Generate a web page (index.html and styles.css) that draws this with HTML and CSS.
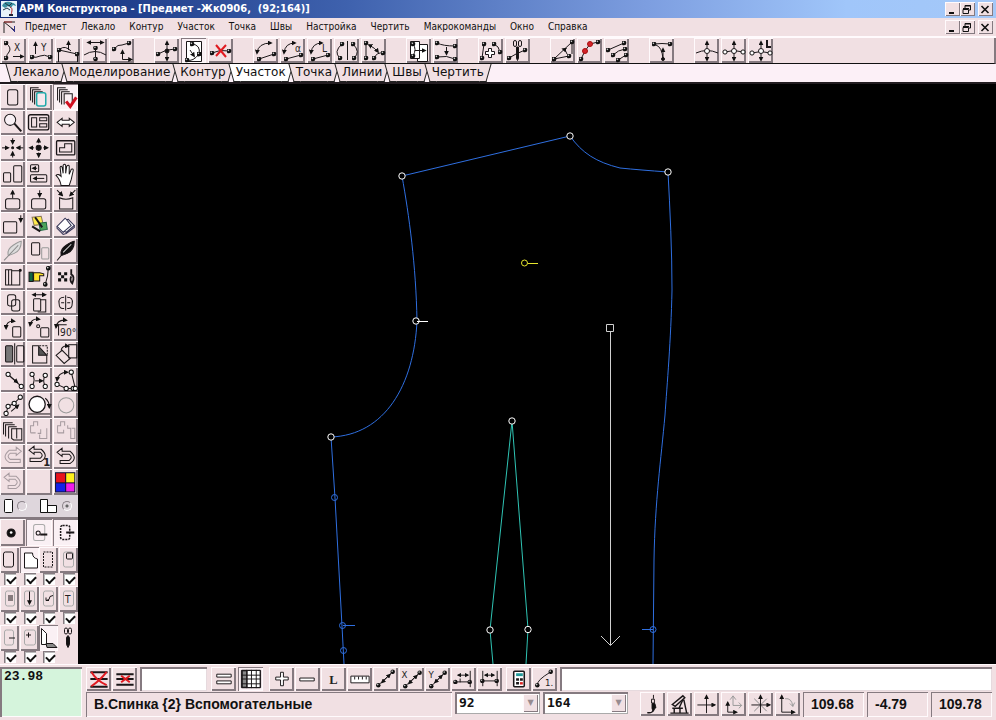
FILE: index.html
```html
<!DOCTYPE html>
<html lang="ru">
<head>
<meta charset="utf-8">
<title>АРМ Конструктора</title>
<link rel="stylesheet" href="styles.css">
</head>
<body>
<svg class="defs" aria-hidden="true">
  <defs>
    <marker id="dot" viewBox="0 0 6 6" refX="3" refY="3" markerWidth="5" markerHeight="5" markerUnits="userSpaceOnUse"><circle cx="3" cy="3" r="2.800" fill="#111"/><circle cx="2.300" cy="2.200" r="1" fill="#ccc"/></marker>
    <marker id="ring" viewBox="0 0 6 6" refX="3" refY="3" markerWidth="6" markerHeight="6" markerUnits="userSpaceOnUse"><circle cx="3" cy="3" r="2.100" fill="#fff" stroke="#111"/></marker>
    <marker id="arrow" viewBox="0 0 6 6" refX="4" refY="3" markerWidth="5" markerHeight="5" markerUnits="userSpaceOnUse" orient="auto-start-reverse"><path d="M0 0 6 3 0 6z" fill="#111"/></marker>
    <marker id="node" viewBox="0 0 8 8" refX="4" refY="4" markerWidth="8" markerHeight="8" markerUnits="userSpaceOnUse"><circle cx="4" cy="4" r="3.200" fill="#000" stroke="#fff"/></marker>
  </defs>
</svg>
<div class="app">
<header class="titlebar">
  <svg class="logo" viewBox="0 0 16 16" aria-hidden="true"><path fill="#e8f2fa" d="M0 0h16v16H0z"/><path d="M1 5C2 1 6 0 9 1s5 1 6 4l-3-1-2 3-3-2-3 2z" fill="#3a8fa0"/><path d="M4 2l4 3 3-3M2 9l4-2 3 2" stroke="#234" fill="none"/><path d="M9 6c3 1 2 4 1 8" stroke="#b22" fill="none"/><path d="M8 14h4" stroke="#223" stroke-width="2"/></svg>
  <h1>АРМ Конструктора - [Предмет -Жк0906,&nbsp; (92;164)]</h1>
  <div class="winbtns">
    <button aria-label="Свернуть"><svg viewBox="0 0 14 13"><path d="M4 10h5" stroke-width="2"/></svg></button><button aria-label="Восстановить"><svg viewBox="0 0 14 13"><path d="M5 5V2.500h5.500V7H9M3 6.500h5.500v4H3zM3 5.500h6M5 3h6"/></svg></button><button class="close" aria-label="Закрыть"><svg viewBox="0 0 14 13"><path d="M3.500 3l7 7M10.500 3l-7 7" stroke-width="1.600"/></svg></button>
  </div>
</header>
<nav class="menubar">
  <svg class="docicon" viewBox="0 0 16 16" aria-hidden="true"><path d="M2 14V3M2 3h11M2 3l10 8" stroke="#222" fill="none"/><path d="M2 3h8" stroke="#a33"/><path d="M12.500 7v6M9 9l4 4" stroke="#338"/></svg>
  <button>Предмет</button><button>Лекало</button><button>Контур</button><button>Участок</button><button>Точка</button><button>Швы</button><button>Настройка</button><button>Чертить</button><button>Макрокоманды</button><button>Окно</button><button>Справка</button>
  <div class="winbtns">
    <button aria-label="Свернуть окно"><svg viewBox="0 0 14 13"><path d="M4 10h5" stroke-width="2"/></svg></button><button aria-label="Восстановить окно"><svg viewBox="0 0 14 13"><path d="M5 5V2.500h5.500V7H9M3 6.500h5.500v4H3zM3 5.500h6M5 3h6"/></svg></button><button class="close" aria-label="Закрыть окно"><svg viewBox="0 0 14 13"><path d="M3.500 3l7 7M10.500 3l-7 7" stroke-width="1.600"/></svg></button>
  </div>
</nav>
<div class="toolbar" role="toolbar" aria-label="Участок">
  <div class="group">
    <button class="tool" aria-label="Сдвиг по X"><svg viewBox="0 0 25 25"><path class="ends" d="M5 5q6 5 3 9-2 2-3 6"/><text x="13" y="13">X</text><path class="to" d="M12 18.500h10"/></svg></button>
    <button class="tool" aria-label="Сдвиг по Y"><svg viewBox="0 0 25 25"><path class="to" d="M7.500 16V5"/><text x="13" y="13">Y</text><path class="ends" d="M4 19q4 1 8-1t10 1"/></svg></button>
    <button class="tool" aria-label="Поднять участок"><svg viewBox="0 0 25 25"><path class="dots" d="M4 12l18 4"/><path d="M3.500 12v12M22.500 16v8M5 11q5-4 11 2"/><path class="to" d="M13.500 12V4"/></svg></button>
    <button class="tool" aria-label="Растянуть"><svg viewBox="0 0 25 25"><path class="both" d="M6 4.500h15"/><path class="dots" d="M13.500 10v11"/><path d="M2 17q11-7 22 0"/></svg></button>
    <button class="tool" aria-label="Перенести участок"><svg viewBox="0 0 25 25"><path class="ends" d="M5 11q4-5 8-4l7-2"/><path class="both" d="M13.500 13v8.500h9"/></svg></button>
  </div>
  <div class="group">
    <button class="tool" aria-label="Изгиб"><svg viewBox="0 0 25 25"><path class="dots" d="M4 16q8-5 17-5"/><path class="both" d="M13 4v18"/><circle class="solid" cx="13" cy="13" r="2"/></svg></button>
    <button class="tool pressed" aria-label="Лист"><svg viewBox="0 0 25 25"><path d="M5.500 3.500h15v20h-15z" fill="#fff"/><path class="dots" d="M11 6q9 1 7 10"/><path class="dots" d="M18 16q-6 8-12 6"/><path class="to" d="M9 12l4 6"/></svg></button>
    <button class="tool" aria-label="Удалить участок"><svg viewBox="0 0 25 25"><path class="dots" d="M4 15q8-4 17-2"/><path class="red" d="M8 7l10 12M18 7L8 18"/></svg></button>
  </div>
  <div class="group">
    <button class="tool" aria-label="Поворот"><svg viewBox="0 0 25 25"><path class="both" d="M4 15Q5 5 18 5"/><path class="dots" d="M6 21l15-5"/></svg></button>
    <button class="tool" aria-label="Поворот на угол"><svg viewBox="0 0 25 25"><path class="both" d="M4 15Q5 5 15 5"/><text x="15" y="14">α</text><path class="dots" d="M6 21l15-4"/></svg></button>
    <button class="tool" aria-label="Поворот по длине"><svg viewBox="0 0 25 25"><path class="both" d="M4 15Q5 5 15 5"/><text x="15" y="14">L</text><path class="dots" d="M6 21l15-4"/></svg></button>
    <button class="tool" aria-label="Отразить"><svg viewBox="0 0 25 25"><path class="dots" d="M8 6q-9 8-2 14"/><path class="dots" d="M19 6q8 8 1 14"/><path d="M13.500 3v19"/></svg></button>
    <button class="tool" aria-label="Развернуть"><svg viewBox="0 0 25 25"><path class="dots" d="M5 5v15"/><path class="dots" d="M13 20q3-6 9-5"/><path class="both" d="M8 7q6 3 9 7"/></svg></button>
  </div>
  <div class="group">
    <button class="tool" aria-label="Копировать участок"><svg viewBox="0 0 25 25"><path d="M4.500 3.500h9v17h-9zM13.500 6.500h8v17h-10v-3" fill="#fff"/><path class="dots" d="M7 6q4 5 0 12"/><path class="to" d="M9 12.500h10"/></svg></button>
    <button class="tool" aria-label="Сместить участок"><svg viewBox="0 0 25 25"><path class="dots" d="M4 5q6 3 18 3"/><path class="dots" d="M4 19q10-2 18 2"/><path class="to" d="M13.500 9v7"/></svg></button>
  </div>
  <div class="group">
    <button class="tool" aria-label="Соединить"><svg viewBox="0 0 25 25"><path class="dots" d="M6 6L4 20"/><path class="dots" d="M16 6q5 2 6 8"/><path d="M10.500 10.500h3v3h3v3h-3v3h-3v-3h-3v-3h3z" fill="#fff"/></svg></button>
    <button class="tool" aria-label="Разрезать"><svg viewBox="0 0 25 25"><rect x="8.500" y="2.500" width="3" height="6" rx="1.500"/><rect x="13.500" y="2.500" width="3" height="6" rx="1.500"/><path class="solid" d="M11.500 9h2v11l-1 2.500-1-2.500z"/><path class="dots" d="M4 20q6-4 16-8"/></svg></button>
  </div>
  <div class="group">
    <button class="tool" aria-label="Угол"><svg viewBox="0 0 25 25"><path class="dots" d="M22 4L4 21"/><path class="dots" d="M4 21l15-3"/><path d="M22 4v12"/><path class="to" d="M17 16q-1-4-4-5"/></svg></button>
    <button class="tool" aria-label="Вставить точки"><svg viewBox="0 0 25 25"><path class="dots" d="M21 4l-8 2-5 7-4 8"/><circle class="reddot" cx="13" cy="6" r="2.500"/><circle class="reddot" cx="8" cy="13" r="2.500"/></svg></button>
    <button class="tool" aria-label="Параллельные"><svg viewBox="0 0 25 25"><path class="dots" d="M4 12l16-7"/><path class="dots" d="M9 17q5-5 12-6"/><path class="dots" d="M14 22l8-5"/></svg></button>
  </div>
  <div class="group">
    <button class="tool" aria-label="Переместить точку"><svg viewBox="0 0 25 25"><path class="dots" d="M5 6q8-1 16 0"/><path class="to" d="M14 22V11"/><path d="M7 7q6 2 7 14"/><circle class="solid" cx="14" cy="21" r="1.500"/></svg></button>
  </div>
  <div class="group">
    <button class="tool" aria-label="Сгладить"><svg viewBox="0 0 25 25"><path class="both" d="M13 4v18"/><path d="M2 15q11-5 22 0"/><circle cx="13" cy="13" r="2.500" fill="#fff"/></svg></button>
    <button class="tool" aria-label="Сгладить по точкам"><svg viewBox="0 0 25 25"><path class="both" d="M13 4v18"/><path class="rings" d="M4 14q9-3 18 0"/><circle cx="13" cy="13" r="2.500" fill="#fff"/></svg></button>
    <button class="tool" aria-label="Сгладить по длине"><svg viewBox="0 0 25 25"><path class="both" d="M13 4v18"/><path class="rings" d="M4 15q9-3 18 0"/><circle cx="13" cy="13" r="2.500" fill="#fff"/><path d="M19 2v7h4" stroke-width="2"/></svg></button>
  </div>
</div>
<div class="tabs" role="tablist">
  <button role="tab">Лекало</button><button role="tab">Моделирование</button><button role="tab">Контур</button><button role="tab" class="active" aria-selected="true">Участок</button><button role="tab">Точка</button><button role="tab">Линии</button><button role="tab">Швы</button><button role="tab">Чертить</button>
</div>
<main class="work">
<aside class="side">
  <div class="palette">
    <button class="tool" aria-label="Деталь"><svg viewBox="0 0 25 25"><rect x="7.500" y="5.500" width="10" height="15" rx="2"/></svg></button>
    <button class="tool" aria-label="Набор деталей"><svg viewBox="0 0 25 25"><path d="M4.500 16V3.500h8M6.500 18V5.500h8M8.500 20V7.500h8"/><rect x="10.500" y="8.500" width="9" height="13" rx="2" fill="#f6e8ec" stroke="#2aa" stroke-width="1.500"/></svg></button>
    <button class="tool pressed" aria-label="Выбрать детали"><svg viewBox="0 0 25 25"><path d="M4.500 16V3.500h8M6.500 18V5.500h8M8.500 20V7.500h8M11 20V9.500h8v9"/><path d="M13 17l4 5 6-9" stroke="#d00f20" stroke-width="3"/></svg></button>

    <button class="tool" aria-label="Лупа"><svg viewBox="0 0 25 25"><circle cx="10" cy="9.500" r="5.500" fill="#f8f0f4"/><path d="M14 13l7 8" stroke-width="2"/></svg></button>
    <button class="tool" aria-label="Раскладка"><svg viewBox="0 0 25 25"><rect x="2.500" y="4.500" width="20" height="15" rx="2" stroke-width="1.300"/><path d="M5.500 7.500h5v9h-5zM13.500 7.500h7v3h-7zM13.500 13.500h7v3h-7z"/></svg></button>
    <button class="tool" aria-label="По ширине"><svg viewBox="0 0 25 25"><path d="M4 12l5-4v2h7V8l5 4-5 4v-2H9v2z" fill="#fff"/></svg></button>

    <button class="tool" aria-label="Сжать"><svg viewBox="0 0 25 25"><path class="to" d="M12.500 3v5"/><path class="to" d="M12.500 22v-5"/><path class="to" d="M2 12.500h6"/><path class="to" d="M23 12.500h-6"/><circle class="solid" cx="12.500" cy="12.500" r="1"/></svg></button>
    <button class="tool" aria-label="Центр"><svg viewBox="0 0 25 25"><path class="to" d="M12.500 8V4"/><path class="to" d="M12.500 17v4"/><path class="to" d="M8 12.500H4"/><path class="to" d="M17 12.500h4"/><circle class="solid" cx="12.500" cy="12.500" r="2.500"/></svg></button>
    <button class="tool" aria-label="Контур детали"><svg viewBox="0 0 25 25"><rect x="3.500" y="5.500" width="18" height="14" rx="1" stroke-width="1.300"/><path d="M6.500 16.500v-4h5v-4h7v8z"/></svg></button>

    <button class="tool" aria-label="Масштаб"><svg viewBox="0 0 25 25"><rect x="3.500" y="11.500" width="7" height="9" rx="1"/><rect x="13.500" y="4.500" width="8" height="16" rx="1"/></svg></button>
    <button class="tool" aria-label="Перенос"><svg viewBox="0 0 25 25"><rect x="4.500" y="3.500" width="8" height="7" rx="1"/><rect x="4.500" y="13.500" width="16" height="7" rx="1"/><path class="to" d="M11 7H7"/><path class="to" d="M18 17H8"/></svg></button>
    <button class="tool" aria-label="Рука"><svg viewBox="0 0 25 25"><path d="M8 24q-1-6-5-10 2-2 5 1L7 6q1-2 2 0l1 6V4q1.500-2 2.500 0v8l1-7q2-2 2.500 0v8l2-5q2-1 2 1l-2 9-2 6z" fill="#fff"/></svg></button>

    <button class="tool" aria-label="Поднять"><svg viewBox="0 0 25 25"><rect x="5.500" y="11.500" width="14" height="10" rx="2"/><path class="to" d="M12.500 11V4"/></svg></button>
    <button class="tool" aria-label="Опустить"><svg viewBox="0 0 25 25"><rect x="5.500" y="11.500" width="14" height="10" rx="2"/><path class="to" d="M13.500 3v6"/></svg></button>
    <button class="tool" aria-label="Собрать"><svg viewBox="0 0 25 25"><path class="to" d="M4 3l5 5"/><path class="to" d="M22 3l-5 5"/><path d="M6.500 10.500q6 3 13 0v11h-13z"/></svg></button>

    <button class="tool" aria-label="Сдвинуть вниз"><svg viewBox="0 0 25 25"><rect x="3.500" y="9.500" width="13" height="11" rx="1"/><path class="to" d="M20.500 3v6"/></svg></button>
    <button class="tool" aria-label="Цвет"><svg viewBox="0 0 25 25"><path d="M6 5l9-1 2 8-9 1z" fill="#ffe94a" stroke="#875"/><path d="M13 11l7-1 1 7-7 1z" fill="#4ba35a" stroke="#264"/><path d="M6 14l8 5" stroke-width="2"/><path d="M9 5l7 10" stroke-width="2"/></svg></button>
    <button class="tool" aria-label="Справочник"><svg viewBox="0 0 25 25"><path d="M4 14l8-8q2 2 3 1l6 6-8 7q-2-2-3 0z" fill="#fff" stroke="#335"/><path d="M13 7l5 6-7 6M4 14v2l6 6 3-1 8-6v-2" stroke="#335"/></svg></button>

    <button class="tool" aria-label="Перо серое"><svg viewBox="0 0 25 25"><path d="M8 16q-1-5 5-9t8-4q0 9-7 12t-6 1z" fill="#ddd" stroke="#999"/><path d="M4 22L18 7" stroke="#888"/></svg></button>
    <button class="tool" aria-label="Копия детали"><svg viewBox="0 0 25 25"><rect x="5.500" y="4.500" width="8" height="12" rx="1"/><rect x="15.500" y="9.500" width="7" height="11" rx="1" stroke="#999"/></svg></button>
    <button class="tool" aria-label="Перо"><svg viewBox="0 0 25 25"><path d="M8 16q-1-5 5-9t8-4q0 9-7 12t-6 1z" class="solid"/><path d="M4 22l5-6"/><path d="M10 14L18 6" stroke="#ddd"/></svg></button>

    <button class="tool" aria-label="Складки"><svg viewBox="0 0 25 25"><path d="M5.500 5.500h3v15h-3zM8.500 5.500h3v15h-3zM11.500 6.500h8v14h-8z"/><circle class="solid" cx="20" cy="6" r="1"/></svg></button>
    <button class="tool" aria-label="Указать"><svg viewBox="0 0 25 25"><path d="M7.500 8.500h6l4 1v2h-4v5h-6z" fill="#ffe32b"/><path d="M3 8h4v9H3z" fill="#164"/><path class="ends" d="M22 4q0 8-3 16"/></svg></button>
    <button class="tool" aria-label="Кнопки"><svg viewBox="0 0 25 25"><path d="M5 8h3v3H5zM11 8h3v3h-3zM8 11h3v3H8zM5 14h3v3H5zM11 14h3v3h-3z" fill="#111" stroke="none"/><path d="M18 5v5q4 2 1 9-3-3-1-7" stroke-width="1.800"/></svg></button>

    <button class="tool" aria-label="Пересечение"><svg viewBox="0 0 25 25"><rect x="7.500" y="4.500" width="8" height="11" rx="2"/><rect x="11.500" y="9.500" width="8" height="11" rx="2"/></svg></button>
    <button class="tool" aria-label="Раздвинуть"><svg viewBox="0 0 25 25"><path class="both" d="M7 4.500h12"/><rect x="7.500" y="8.500" width="7" height="12" rx="1"/><path d="M14.500 9.500h5v12h-8"/></svg></button>
    <button class="tool" aria-label="Симметрия"><svg viewBox="0 0 25 25"><path d="M12.500 5v15M11 7q-6 0-5 6 0 6 5 5M14 7q6 0 5 6 0 6-5 5M8 12.500h3M14 12.500h3"/></svg></button>

    <button class="tool" aria-label="Повернуть"><svg viewBox="0 0 25 25"><path class="both" d="M6 13q0-8 8-7"/><rect x="12.500" y="11.500" width="8" height="10" rx="1"/></svg></button>
    <button class="tool" aria-label="Повернуть вокруг точки"><svg viewBox="0 0 25 25"><path class="both" d="M4 10q1-7 9-6"/><circle cx="12" cy="11" r="1.500"/><rect x="14.500" y="12.500" width="8" height="9" rx="1"/></svg></button>
    <button class="tool" aria-label="Повернуть на 90°"><svg viewBox="0 0 25 25"><path class="both" d="M3 12q1-8 10-7"/><path d="M5.500 20V9.500h8"/><text x="7" y="21">90°</text></svg></button>

    <button class="tool" aria-label="Зеркало"><svg viewBox="0 0 25 25"><rect x="5.500" y="4.500" width="7" height="16" rx="1" fill="#777"/><path d="M14.500 2v21"/><rect x="16.500" y="4.500" width="7" height="16" rx="1"/></svg></button>
    <button class="tool" aria-label="Отворот"><svg viewBox="0 0 25 25"><path d="M12.500 4.500h-6v17h14v-8"/><path d="M12.500 5l8 9h-8z" fill="#555"/><path d="M13 4.500h8v10" stroke-dasharray="2 1"/></svg></button>
    <button class="tool" aria-label="Наложить"><svg viewBox="0 0 25 25"><rect x="15.500" y="3.500" width="8" height="13"/><path d="M3 14l6-5 8 8-6 5z"/><path class="to" d="M8 9q1-5 7-4"/></svg></button>

    <button class="tool" aria-label="Отрезок"><svg viewBox="0 0 25 25"><path class="rings" d="M8 7l13 12"/><path class="to" d="M10 9l7 6"/></svg></button>
    <button class="tool" aria-label="Перенести отрезок"><svg viewBox="0 0 25 25"><path class="rings" d="M6 7q4 5 0 12"/><path class="rings" d="M19 8q-3 5 0 11"/><path class="to" d="M9 13.500h7"/></svg></button>
    <button class="tool" aria-label="Дуга"><svg viewBox="0 0 25 25"><path class="rings" d="M4 17l9 4h7"/><path class="rings" d="M18 5l4 16"/><path class="both" d="M4 13q1-8 10-8"/></svg></button>

    <button class="tool" aria-label="Ломаная"><svg viewBox="0 0 25 25"><path class="rings" d="M6 21l2-7 6-3 6-6"/><path class="to" d="M11 19l7-6"/></svg></button>
    <button class="tool" aria-label="Окружность"><svg viewBox="0 0 25 25"><circle cx="11" cy="12" r="8" fill="#fff" stroke-width="1.300"/><path d="M2 21.500h22"/><path class="to" d="M19 6q4 3 4 9"/></svg></button>
    <button class="tool" aria-label="Круг"><svg viewBox="0 0 25 25"><circle cx="13" cy="13" r="7.500" stroke="#999"/></svg></button>

    <button class="tool" aria-label="Стопка"><svg viewBox="0 0 25 25"><path d="M3.500 16V4.500h9M5.500 18V6.500h9M8.500 20V8.500h8M11.500 20V10.500h10v11h-8z"/><path d="M16.500 10v10"/></svg></button>
    <button class="tool off" aria-label="Разделить"><svg viewBox="0 0 25 25"><path d="M4.500 14.500v-7h3v-4h4v4M4.500 14.500h5M14.500 11v4h-3M20.500 10v10h-7v-4"/></svg></button>
    <button class="tool off" aria-label="Объединить"><svg viewBox="0 0 25 25"><path d="M4.500 14.500v-7h3v-4h4v4M4.500 14.500h6v-3M14.500 7v3h3v10h4V10h-3"/></svg></button>

    <button class="tool off" aria-label="Вернуть"><svg viewBox="0 0 25 25"><path d="M16 3l5 4-5 4V9h-6q-4 3 0 6h10v3H9q-8-5 0-12h7z"/></svg></button>
    <button class="tool" aria-label="Отменить один шаг"><svg viewBox="0 0 25 25"><path d="M8 2L3 6l5 4V8h6q4 3 0 6H4v3h11q8-5 0-12H8z"/><text class="bold" x="17" y="22">1</text></svg></button>
    <button class="tool" aria-label="Отменить"><svg viewBox="0 0 25 25"><path d="M9 4L4 8l5 4v-2h7q4 3 0 6H7v3h10q8-5 0-12H9z"/></svg></button>

    <button class="tool off" aria-label="Отмена недоступна"><svg viewBox="0 0 25 25"><path d="M9 4L4 8l5 4v-2h6q4 3 0 6H8v3h8q8-5 0-12H9z"/></svg></button>
    <button class="tool" aria-label="Пусто"></button>
    <button class="tool" aria-label="Палитра"><svg viewBox="0 0 25 25"><path d="M2 3h20v20H2z" fill="#113" stroke="none"/><path fill="#e8141c" stroke="none" d="M3 4h9v9H3z"/><path fill="#fff01c" stroke="none" d="M13 4h8v9h-8z"/><path fill="#1420e8" stroke="none" d="M3 14h9v8H3z"/><path fill="#f01ce8" stroke="none" d="M13 14h8v8h-8z"/></svg></button>
  </div>
  <div class="modes">
    <label><svg viewBox="0 0 12 18"><rect x="2.500" y="2.500" width="8" height="13" rx="1"/></svg><input type="radio" name="mode" aria-label="Одна деталь"></label>
    <label><svg viewBox="0 0 20 18"><path d="M1.500 2.500h7v13h-7zM8.500 8.500h9v7h-9z"/></svg><input type="radio" name="mode" checked aria-label="Две детали"></label>
  </div>
  <div class="marks">
    <button class="tool" aria-label="Точка"><svg viewBox="0 0 25 25"><circle class="solid" cx="11" cy="13" r="4"/><circle cx="11" cy="12.500" r="1.300" fill="#fff" stroke="none"/></svg></button>
    <button class="tool pressed" aria-label="Надсечка"><svg viewBox="0 0 25 25"><rect x="7.500" y="4.500" width="11" height="16" rx="2" stroke="#aaa"/><circle cx="12" cy="13" r="2"/><path d="M14 14.500h7" stroke-width="2"/></svg></button>
    <button class="tool pressed" aria-label="Надсечка по шву"><svg viewBox="0 0 25 25"><rect x="7.500" y="5.500" width="9" height="14" rx="2" stroke-dasharray="2 1" stroke-width="1.500"/><path d="M13 12.500h8" stroke-width="2"/></svg></button>
  </div>
  <div class="layers">
    <div><button class="tool" aria-label="Деталь"><svg viewBox="0 0 19 25"><rect x="3.500" y="4.500" width="10" height="15" rx="2"/></svg></button><input type="checkbox" checked aria-label="Деталь"></div>
    <div><button class="tool pressed" aria-label="Контур"><svg viewBox="0 0 19 25"><path d="M4.500 20.500v-15h8q0 5 5 6v9z" fill="#fff"/></svg></button><input type="checkbox" checked aria-label="Контур"></div>
    <div><button class="tool" aria-label="Шов"><svg viewBox="0 0 19 25"><rect x="4.500" y="4.500" width="9" height="15" stroke-dasharray="2 1"/></svg></button><input type="checkbox" checked aria-label="Шов"></div>
    <div><button class="tool" aria-label="Карман"><svg viewBox="0 0 19 25"><rect x="4.500" y="4.500" width="10" height="15" rx="2" stroke="#aaa"/><rect x="7.500" y="5.500" width="6" height="6" rx="1"/></svg></button><input type="checkbox" checked aria-label="Карман"></div>
    <div><button class="tool" aria-label="Надписи"><svg viewBox="0 0 19 25"><rect x="5.500" y="4.500" width="9" height="15" rx="2" stroke="#aaa"/><path d="M8 9.500h5M8 11.500h5M8 13.500h5"/></svg></button><input type="checkbox" checked aria-label="Надписи"></div>
    <div><button class="tool" aria-label="Долевая"><svg viewBox="0 0 19 25"><rect x="4.500" y="4.500" width="10" height="15" rx="2" stroke="#aaa"/><path class="to" d="M9.500 5v12"/></svg></button><input type="checkbox" checked aria-label="Долевая"></div>
    <div><button class="tool" aria-label="Размеры"><svg viewBox="0 0 19 25"><rect x="4.500" y="4.500" width="10" height="15" rx="2" stroke="#aaa"/><path d="M7 14l3-1 1-3 3-1M7 11v3h3"/></svg></button><input type="checkbox" checked aria-label="Размеры"></div>
    <div><button class="tool" aria-label="Текст"><svg viewBox="0 0 19 25"><rect x="4.500" y="4.500" width="10" height="15" rx="2" stroke="#aaa"/><text x="6" y="16">T</text></svg></button><input type="checkbox" checked aria-label="Текст"></div>
    <div><button class="tool" aria-label="Минус"><svg viewBox="0 0 19 25"><rect x="4.500" y="4.500" width="9" height="15" rx="2" stroke="#aaa"/><path d="M9 12.500h6"/></svg></button><input type="checkbox" checked aria-label="Минус"></div>
    <div><button class="tool" aria-label="Плюс"><svg viewBox="0 0 19 25"><rect x="4.500" y="4.500" width="11" height="15" rx="2" stroke="#aaa"/><path d="M6 9.500h5M8.500 7v5"/></svg></button><input type="checkbox" checked aria-label="Плюс"></div>
    <div><button class="tool pressed" aria-label="Лекало"><svg viewBox="0 0 19 25"><path d="M2.500 3l5 5v11h-5z" fill="#fff"/><path d="M7 18h7l4 4H8z" fill="#888"/></svg></button><input type="checkbox" checked aria-label="Лекало"></div>
    <div><button class="tool flat" aria-label="Ножницы"><svg viewBox="0 0 19 25"><rect x="5.500" y="2.500" width="3" height="6" rx="1.500"/><rect x="9.500" y="2.500" width="3" height="6" rx="1.500"/><path class="solid" d="M7.500 12L9 10l1.500 2v7L9 22l-1.500-3z"/></svg></button></div>
  </div>
</aside>
<svg class="drawing" viewBox="78 84 918 580" preserveAspectRatio="xMinYMin slice" role="img" aria-label="Чертёж спинки">
  <g class="outline">
    <path d="M402 176L570 136C582 153 596 162 620 168Q640 170 668 172C670 210 672 250 672 290C671 340 667 385 665 415C661 460 655 500 654 560L653 664"/>
    <path d="M402 176C409 215 416 265 417 321C414 385 385 435 331 437L335 498 342 626 344 664"/>
    <circle cx="334.500" cy="497.500" r="3"/><circle cx="342.500" cy="625.500" r="3"/><circle cx="343.500" cy="650.500" r="3"/><circle cx="653" cy="629.500" r="3"/>
    <path d="M343 625.500h12M642 629.500h11"/>
  </g>
  <path class="dart" d="M493 664L490 630 512 421 528 629 526 664"/>
  <path class="knots" d="M402 176L570 136 668 172M416 321L331 437M512 421L490 630 528 629.500"/>
  <path class="tick" d="M417 321.500h11"/>
  <path class="yellow" d="M528 263.500h10"/><circle class="yellow" cx="524.500" cy="263" r="3"/>
  <path class="grain" d="M606.500 324.500h7v7h-7zM610.500 331v314M601 636l9.500 9.500 9.500-9.500"/>
</svg>
</main>
<footer class="bottom">
  <output class="readout">23.98</output>
  <div class="rows">
    <div class="row">
      <button class="tool" aria-label="Удалить всё"><svg viewBox="0 0 25 25"><path d="M4 5.500h18M4 12.500h18M4 20.500h18" stroke-width="2"/><path class="red" d="M5 5q5 9 16 14M21 5Q14 14 5 20"/></svg></button>
      <button class="tool" aria-label="Удалить строку"><svg viewBox="0 0 25 25"><path d="M4 7.500h18M4 12.500h18M4 18.500h18" stroke-width="2"/><path class="red" d="M9 9l9 7M18 9l-9 7"/></svg></button>
      <input class="field short" type="text" aria-label="Значение">
      <button class="tool" aria-label="Равно"><svg viewBox="0 0 25 25"><path d="M5.500 7.500h15v3h-15zM5.500 14.500h15v3h-15z" fill="#fff"/></svg></button>
      <button class="tool pressed wide" aria-label="Таблица"><svg viewBox="0 0 25 25"><path d="M3.500 3.500h19v18h-19z" fill="#fff"/><path d="M4 4h5v17H4z" fill="#888"/><path d="M3 3.500h20v18h-20zM8.500 3v19M13.500 3v19M18.500 3v19M3 8.500h20M3 12.500h20M3 17.500h20"/></svg></button>
      <button class="tool" aria-label="Плюс"><svg viewBox="0 0 25 25"><path d="M11.500 5.500h3v5h5v3h-5v6h-3v-6h-5v-3h5z" fill="#fff"/></svg></button>
      <button class="tool" aria-label="Минус"><svg viewBox="0 0 25 25"><path d="M4.500 11.500h15v3h-15z" fill="#fff"/></svg></button>
      <button class="tool" aria-label="Длина"><svg viewBox="0 0 25 25"><text class="serif" x="8" y="18">L</text></svg></button>
      <button class="tool" aria-label="Линейка"><svg viewBox="0 0 25 25"><path d="M3.500 9.500h19v7h-19z" fill="#fff"/><path d="M7.500 10v3M11.500 10v3M15.500 10v3M19.500 10v3"/></svg></button>
      <button class="tool" aria-label="Расстояние"><svg viewBox="0 0 25 25"><path class="dots" d="M5 19L20 5"/><path class="both" d="M9 16l8-8"/></svg></button>
      <button class="tool" aria-label="Расстояние по X"><svg viewBox="0 0 25 25"><path class="dots" d="M6 20L21 6"/><path class="both" d="M10 17l8-8"/><text x="2" y="11">X</text></svg></button>
      <button class="tool" aria-label="Расстояние по Y"><svg viewBox="0 0 25 25"><path class="dots" d="M6 20L20 6"/><path class="both" d="M10 16l7-7"/><text x="3" y="11">Y</text></svg></button>
      <button class="tool" aria-label="Замер"><svg viewBox="0 0 25 25"><path class="both" d="M7 8.500h10"/><path class="dots" d="M4 15.500h15"/><path d="M19.500 4v17M9 12v4"/></svg></button>
      <button class="tool" aria-label="Замер между"><svg viewBox="0 0 25 25"><path class="both" d="M8 8.500h9"/><path class="dots" d="M5 14.500h15"/><path d="M5.500 4v16M20.500 4v16"/></svg></button>
      <button class="tool spaced" aria-label="Калькулятор"><svg viewBox="0 0 25 25"><rect x="7.500" y="4.500" width="11" height="16" rx="1" fill="#fff" stroke-width="1.600"/><path d="M10 8h7" stroke="#299" stroke-width="3"/><path d="M10 13h3M14 13h3M10 17h3" stroke-width="2.500"/><path d="M14 17h3" stroke="#d22" stroke-width="2.500"/></svg></button>
      <button class="tool" aria-label="Дуга"><svg viewBox="0 0 25 25"><path class="ends" d="M5 19q0-3 3-6t11-8"/><text x="13" y="20">1.</text></svg></button>
      <input class="field command" type="text" aria-label="Команда">
    </div>
    <div class="row status">
      <div class="panel name">В.Спинка {2} Вспомогательные</div>
      <span class="combo"><select aria-label="Размер"><option>92</option></select></span>
      <span class="combo"><select aria-label="Рост"><option>164</option></select></span>
      <div class="views">
        <button class="tool" aria-label="Кисть"><svg viewBox="0 0 25 25"><path d="M13.500 3v4"/><path d="M11.500 7.500h3v4h-3z"/><path class="solid" d="M12 12h3l1 4-3 4-1-3z"/><path d="M7 21.500q5 1 7-3" stroke-width="1.500"/></svg></button>
        <button class="tool" aria-label="Стол"><svg viewBox="0 0 25 25"><path d="M5 13L16 4l2 2L8 15z" stroke-width="1.500"/><path d="M3 22h19M17 8l3 14M5 17h11M7 17v5M13 17v5M16 8l-4 9" stroke-width="1.500"/></svg></button>
        <button class="tool" aria-label="Оси"><svg viewBox="0 0 25 25"><path class="to" d="M12.500 22V4"/><path class="to" d="M3 13.500h18"/></svg></button>
        <button class="tool" aria-label="Перенос осей"><svg viewBox="0 0 25 25"><path d="M12 14V5M9 8l3-4 3 4M12 14h9M18 11l3 3-3 3" stroke="#999"/><path class="both" d="M6.500 11v10h9"/></svg></button>
        <button class="tool" aria-label="Поворот осей"><svg viewBox="0 0 25 25"><path d="M6 7l13 13M19 7L6 20" stroke="#888"/><path class="to" d="M12.500 22V4"/><path class="to" d="M3 13.500h19"/></svg></button>
        <button class="tool" aria-label="Угол осей"><svg viewBox="0 0 25 25"><path class="both" d="M6.500 4v17h13"/><path d="M10 7q7-1 8 8M15 12l3 3 2-4" stroke="#999"/></svg></button>
      </div>
      <div class="panel num">109.68</div>
      <div class="panel num">-4.79</div>
      <div class="panel num">109.78</div>
    </div>
  </div>
</footer>
</div>
</body>
</html>
```

FILE: styles.css
```css
:root {
  --face: #f1e0e3;
  --light: #fffafc;
  --shade: #857a80;
}
* { box-sizing: border-box; }
body {
  margin: 0;
  background: var(--face);
  color: #111;
  font: 10px "DejaVu Sans Condensed", "DejaVu Sans", sans-serif;
}
button, input, select { font: inherit; color: inherit; margin: 0; padding: 0; border: 0; border-radius: 0; background: none; }
.defs { position: absolute; width: 0; height: 0; }
.app { display: flex; flex-direction: column; height: 100vh; min-height: 640px; overflow: hidden; }

/* Title and menu */
.titlebar {
  display: flex; align-items: center; height: 18px; padding: 0 3px 0 1px; gap: 2px;
  background: linear-gradient(90deg, #0f2b78, #3f62ae 35%, #7d9ee0 65%, #a0c6fa 85%, #a4c8f8);
  color: #fff;
}
.titlebar h1 { margin: 0; flex: 1; font-size: 11px; line-height: 16px; font-weight: bold; white-space: nowrap; }
.logo, .docicon { width: 16px; height: 16px; flex: none; }
.menubar { display: flex; align-items: center; height: 20px; padding: 0 3px 0 2px; border-bottom: 2px solid var(--light); }
.menubar > button { padding: 0 7px; line-height: 16px; white-space: nowrap; }
.winbtns { display: flex; margin-left: auto; }
.winbtns button { width: 15px; height: 14px; background: var(--face); box-shadow: inset 1px 1px var(--light), inset -1px -1px var(--shade); }
.winbtns .close { margin-left: 3px; }
.winbtns svg { display: block; width: 14px; height: 13px; fill: none; stroke: #111; }

/* Tool buttons */
.tool {
  width: 25px; height: 25px; flex: none; overflow: hidden;
  background: var(--face);
  box-shadow: inset 1px 1px var(--light), inset -2px -2px var(--shade);
}
.tool.pressed { background: #faf0f4; box-shadow: inset 1px 1px var(--shade), inset -1px -1px var(--light); }
.tool.flat { box-shadow: none; }
.tool svg { display: block; width: 100%; height: 100%; fill: none; stroke: #1a1618; }
.tool.off svg { stroke: #a79ba0; }
.tool text { fill: #222; stroke: none; font-size: 10px; }
.tool text.bold { font-size: 11px; font-weight: bold; }
.tool text.serif { font: bold 13px "Liberation Serif", serif; }
.tool .solid { fill: #111; }
.tool .red { stroke: #e01a20; stroke-width: 2; }
.tool .reddot { fill: #d3222a; stroke: #a11; }
.dots { marker-start: url(#dot); marker-mid: url(#dot); marker-end: url(#dot); }
.ends { marker-start: url(#dot); marker-end: url(#dot); }
.rings { marker-start: url(#ring); marker-mid: url(#ring); marker-end: url(#ring); }
.to { marker-end: url(#arrow); }
.both { marker-start: url(#arrow); marker-end: url(#arrow); }

.toolbar { display: flex; gap: 20px; height: 26px; padding-left: 1px; border-bottom: 1px solid #111; border-right: 2px solid var(--shade); }
.group { display: flex; gap: 2px; }

/* Tabs */
.tabs { display: flex; gap: 8px; height: 20px; padding-left: 12px; background: #fcf0f7; border-bottom: 2px solid #221c20; }
.tabs button {
  position: relative; isolation: isolate; height: 18px; padding: 0 1px; white-space: nowrap;
  font: 12px/17px "DejaVu Sans", sans-serif;
  background: var(--face); border-bottom: 1px solid #222;
}
.tabs button::before, .tabs button::after {
  content: ""; position: absolute; z-index: -1; top: 0; bottom: -1px; width: 6px;
  background: inherit; border-bottom: 1px solid #222;
}
.tabs button::before { left: -4px; border-left: 1px solid #222; transform: skewX(16deg); }
.tabs button::after { right: -4px; border-right: 1px solid #222; transform: skewX(-16deg); }
.tabs .active { background: #fff; }

/* Work area */
.work { display: flex; flex: 1; min-height: 0; background: #000; }
.side { display: flex; flex-direction: column; width: 78px; flex: none; background: var(--face); }
.palette { display: grid; flex: 1; min-height: 0; grid-template-columns: repeat(3, 1fr); grid-auto-rows: 1fr; column-gap: 1px; }
.palette .tool { width: auto; height: auto; min-height: 0; }
.modes { display: flex; align-items: center; justify-content: space-between; height: 24px; padding: 0 6px 0 2px; background: #ded6dc; border-bottom: 2px solid var(--shade); }
.modes label { display: flex; align-items: center; gap: 3px; }
.modes svg { height: 18px; fill: #fff; stroke: #111; }
.modes input { appearance: none; width: 10px; height: 10px; border: 1px solid #8a8288; border-right-color: #fff; border-bottom-color: #fff; border-radius: 50%; }
.modes input:checked { background: radial-gradient(circle, #666 0 1px, transparent 2px); }
.marks { display: grid; grid-template-columns: repeat(3, 1fr); height: 28px; column-gap: 1px; }
.marks .tool { width: auto; height: 27px; }
.layers { display: grid; grid-template-columns: repeat(4, 1fr); }
.layers > div { display: flex; flex-direction: column; height: 39px; }
.layers .tool { width: 19px; height: 26px; }
.layers input {
  appearance: none; position: relative; width: 12px; height: 12px; margin-left: 4px;
  background: #fff; box-shadow: inset 1px 1px var(--shade), inset 2px 2px #bbb;
}
.layers input:checked::after {
  content: ""; position: absolute; left: 3px; top: 3px; width: 7px; height: 4px;
  border: solid #111; border-width: 0 0 2px 2px; transform: rotate(-45deg);
}
.drawing { flex: 1; min-width: 0; height: 100%; fill: none; }
.outline { stroke: #2f6fe0; }
.dart { stroke: #2fc4b4; }
.knots { stroke: none; marker-start: url(#node); marker-mid: url(#node); marker-end: url(#node); }
.tick { stroke: #fff; }
.yellow { stroke: #e6e62e; }
.grain { stroke: #d0d0d0; }

/* Bottom bars */
.bottom { display: flex; gap: 4px; height: 56px; padding: 2px 4px 3px 0; border-top: 1px solid var(--light); }
.readout {
  width: 82px; padding: 2px 4px; background: #d5f4dc;
  font: bold 13px/16px "Liberation Mono", monospace;
  box-shadow: inset 2px 2px var(--shade), inset -1px -1px var(--light);
}
.rows { display: flex; flex: 1; min-width: 0; flex-direction: column; }
.row { display: flex; gap: 1px; height: 25px; }
.row .tool { height: 24px; }
.field { height: 24px; padding: 0 4px; background: #fff; box-shadow: inset 2px 2px var(--shade), inset -1px -1px #e6dade; }
.field.short { width: 67px; margin: 0 3px 0 2px; }
.field.command { flex: 1; min-width: 0; margin-left: 2px; }
.tool.wide { margin: 0 5px 0 1px; }
.tool.spaced { margin-left: 3px; }
.status { gap: 3px; }
.panel { height: 25px; padding: 0 8px; white-space: nowrap; box-shadow: inset 1px 1px var(--shade), inset -1px -1px var(--light); }
.name { flex: 1; font: bold 14px/24px "Liberation Sans", sans-serif; }
.num { width: 61px; font: bold 14px/24px "Liberation Sans", sans-serif; }
.combo { position: relative; width: 85px; height: 22px; background: #fff; box-shadow: inset 2px 2px var(--shade), inset -1px -1px #aaa; }
.combo select { appearance: none; width: 100%; height: 22px; padding-left: 4px; font: bold 13px/20px "DejaVu Sans Mono", monospace; }
.combo::after {
  content: "▼"; position: absolute; right: 2px; top: 2px; width: 15px; height: 18px; pointer-events: none;
  color: #978b90; font: 8px/18px "DejaVu Sans", sans-serif; text-align: center;
  background: var(--face); box-shadow: inset 1px 1px var(--light), inset -1px -1px var(--shade);
}
.views { display: flex; gap: 2px; margin-left: 9px; }
```
